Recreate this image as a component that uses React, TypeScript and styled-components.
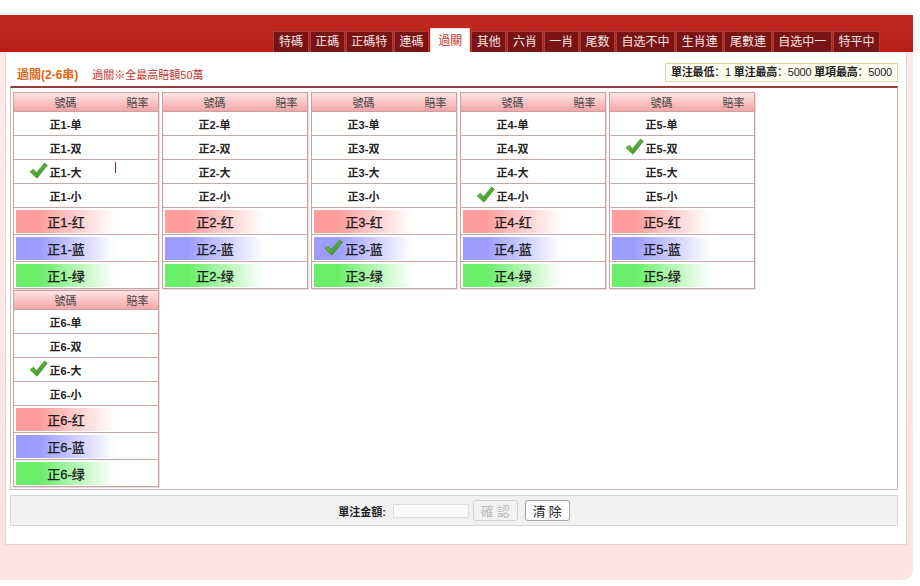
import styled, { createGlobalStyle } from "styled-components";

const GlobalStyle = createGlobalStyle`
  body {
    margin: 0;
    background: #fff;
    font-family: "Liberation Sans", "Noto Sans CJK SC", "Noto Sans CJK TC", sans-serif;
    color: #222;
  }
`;

type Tone = "red" | "blue" | "green";

const tabs = [
  "特碼",
  "正碼",
  "正碼特",
  "連碼",
  "過關",
  "其他",
  "六肖",
  "一肖",
  "尾数",
  "自选不中",
  "生肖連",
  "尾數連",
  "自选中一",
  "特平中",
];

// which item is ticked in each group (index into the 7 items)
const ticked = [2, -1, 5, 3, 1, 2];
const plainItems = ["单", "双", "大", "小"];
const colorItems: { label: string; tone: Tone }[] = [
  { label: "红", tone: "red" },
  { label: "蓝", tone: "blue" },
  { label: "绿", tone: "green" },
];

const toneColor: Record<Tone, string> = {
  red: "#ff9c9c",
  blue: "#9c9cff",
  green: "#68ee68",
};

const Page = styled.div`
  padding-top: 15px;
  width: 913px;
`;

const Frame = styled.div`
  background: linear-gradient(180deg, #fbeaea 0%, #fde3e3 100%);
  border-bottom-right-radius: 10px;
  padding-bottom: 35px;
`;

const TopBar = styled.div`
  height: 37px;
  background: linear-gradient(180deg, #c12a22 0%, #b81e17 100%);
  display: flex;
  justify-content: flex-end;
  align-items: flex-end;
  gap: 1px;
  padding-right: 33px;
`;

const Tab = styled.div<{ $active?: boolean }>`
  height: ${(p) => (p.$active ? "23px" : "20px")};
  line-height: ${(p) => (p.$active ? "24px" : "21px")};
  padding: 0 ${(p) => (p.$active ? "7px" : "4.6px")};
  font-size: 12px;
  color: ${(p) => (p.$active ? "#c23a2a" : "#f6e6e6")};
  background: ${(p) => (p.$active ? "#fff" : "#7a1313")};
  border: 1px solid ${(p) => (p.$active ? "#f0d8d8" : "#a8403a")};
  border-bottom: none;
  white-space: nowrap;
`;

const Panel = styled.div`
  margin: 0 6px 0 5px;
  background: #fff;
  border: 1px solid #ecd2d2;
  border-top: none;
  padding: 0 8px 18px 4px;
`;

const InfoRow = styled.div`
  height: 34px;
  display: flex;
  align-items: flex-end;
  padding: 0 0 4px 7px;
  box-sizing: border-box;
`;

const Title = styled.span`
  color: #e0661a;
  font-size: 12px;
  font-weight: bold;
  margin-right: 14px;
`;

const Note = styled.span`
  color: #c4322a;
  font-size: 11px;
`;

const Limits = styled.div`
  margin-left: auto;
  height: 17px;
  line-height: 17px;
  padding: 0 5px;
  background: #fffff0;
  border: 1px solid #dcd6a4;
  font-size: 11px;
  letter-spacing: -0.2px;
  color: #222;
  white-space: nowrap;
  b {
    font-weight: bold;
  }
`;

const BetBox = styled.div`
  border: 1px solid #d2b2b2;
  border-top: 2px solid #9c3a3a;
  padding: 4px 0 2px 2px;
  display: grid;
  grid-template-columns: repeat(5, 146px);
  column-gap: 3px;
  row-gap: 1px;
`;

const Group = styled.div`
  border: 1px solid #c7a3a3;
  box-shadow: 1px 1px 0 #eadcdc;
  background: #fff;
`;

const Head = styled.div`
  height: 18px;
  display: grid;
  grid-template-columns: 103px 1fr;
  align-items: center;
  font-size: 11px;
  color: #444;
  background: linear-gradient(180deg, #fde4e4 0%, #f9c2c2 55%, #f4a6a6 100%);
  border-bottom: 1px solid #c7a3a3;
  span {
    text-align: center;
  }
`;

const Row = styled.div`
  position: relative;
  height: 23px;
  display: grid;
  grid-template-columns: 103px 1fr;
  align-items: center;
  border-bottom: 1px solid #c9a7a7;
  font-size: 11px;
  font-weight: bold;
`;

const ColorRow = styled.div`
  height: 23px;
  padding: 2px 1px 1px 2px;
  border-bottom: 1px solid #c9a7a7;
  &:last-child {
    border-bottom: none;
  }
`;

const ColorFill = styled.div<{ $tone: Tone }>`
  height: 100%;
  display: grid;
  grid-template-columns: 100px 1fr;
  align-items: center;
  background: linear-gradient(
    90deg,
    ${(p) => toneColor[p.$tone]} 0%,
    ${(p) => toneColor[p.$tone]} 16%,
    #fff 70%
  );
  font-size: 13px;
  font-weight: normal;
  color: #1a1a1a;
  -webkit-text-stroke: 0.3px #1a1a1a;
`;

const Name = styled.span`
  justify-self: center;
  position: relative;
  white-space: nowrap;
`;

const Tick = styled.svg`
  position: absolute;
  right: calc(100% + 2px);
  top: 50%;
  transform: translateY(-58%);
  width: 19px;
  height: 17px;
`;

const Caret = styled.span`
  position: absolute;
  left: 101px;
  top: 2px;
  width: 1px;
  height: 11px;
  background: #7a2a2a;
`;

const BottomBar = styled.div`
  margin-top: 5px;
  height: 29px;
  background: #f1f1f1;
  border: 1px solid #d6d6d6;
  display: flex;
  justify-content: center;
  align-items: center;
`;

const AmountLabel = styled.span`
  font-size: 11px;
  font-weight: bold;
  margin-right: 7px;
`;

const AmountInput = styled.input`
  width: 76px;
  height: 14px;
  box-sizing: border-box;
  border: 1px solid #dedede;
  background: #fafafa;
  margin: 0 4px 0 0;
  padding: 0;
`;

const Button = styled.button<{ $disabled?: boolean }>`
  width: 45px;
  height: 21px;
  margin-left: ${(p) => (p.$disabled ? "0" : "7px")};
  border-radius: 3px;
  border: 1px solid ${(p) => (p.$disabled ? "#d2d2d2" : "#a6a6a6")};
  background: ${(p) => (p.$disabled ? "#f2f2f2" : "#fff")};
  color: ${(p) => (p.$disabled ? "#bbb" : "#222")};
  font-family: inherit;
  font-size: 13px;
  letter-spacing: 3px;
  padding: 0 0 0 3px;
`;

const Check = () => (
  <Tick viewBox="0 0 20 18">
    <defs>
      <linearGradient id="chk" x1="0" y1="0" x2="1" y2="1">
        <stop offset="0" stopColor="#7acb4e" />
        <stop offset="1" stopColor="#2f8a22" />
      </linearGradient>
    </defs>
    <path
      d="M1 10.2 L4.6 7.4 L7.8 11.2 L16.4 1 L19.4 3.2 L8.4 17 Z"
      fill="url(#chk)"
      stroke="#2c7a1e"
      strokeWidth="0.6"
      strokeLinejoin="round"
    />
  </Tick>
);

const BetGroup = ({ n }: { n: number }) => {
  const tick = ticked[n - 1];
  return (
    <Group>
      <Head>
        <span>號碼</span>
        <span>賠率</span>
      </Head>
      {plainItems.map((item, i) => (
        <Row key={item}>
          <Name>
            {tick === i && <Check />}
            正{n}-{item}
          </Name>
          <span />
          {n === 1 && i === 2 && <Caret />}
        </Row>
      ))}
      {colorItems.map((c, i) => (
        <ColorRow key={c.label}>
          <ColorFill $tone={c.tone}>
            <Name>
              {tick === i + 4 && <Check />}
              正{n}-{c.label}
            </Name>
            <span />
          </ColorFill>
        </ColorRow>
      ))}
    </Group>
  );
};

export default function App() {
  return (
    <>
      <GlobalStyle />
      <Page>
        <Frame>
          <TopBar>
            {tabs.map((t) => (
              <Tab key={t} $active={t === "過關"}>
                {t}
              </Tab>
            ))}
          </TopBar>
          <Panel>
            <InfoRow>
              <Title>過關(2-6串)</Title>
              <Note>過關※全最高賠額50萬</Note>
              <Limits>
                <b>單注最低</b>：1 <b>單注最高</b>：5000 <b>單項最高</b>：5000
              </Limits>
            </InfoRow>
            <BetBox>
              {[1, 2, 3, 4, 5, 6].map((n) => (
                <BetGroup key={n} n={n} />
              ))}
            </BetBox>
            <BottomBar>
              <AmountLabel>單注金額:</AmountLabel>
              <AmountInput />
              <Button $disabled disabled>
                確認
              </Button>
              <Button>清除</Button>
            </BottomBar>
          </Panel>
        </Frame>
      </Page>
    </>
  );
}
